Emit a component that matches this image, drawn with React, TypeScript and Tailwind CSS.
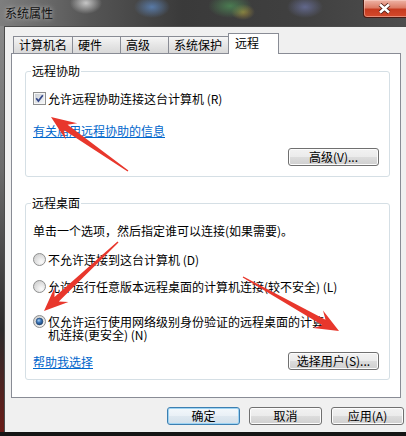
import clsx from 'clsx';

type Pt = [number, number];

// tapered annotation arrow: thin tail, barbed head
function arrowPoints(tail: Pt, tip: Pt, headLen = 22, headHalf = 10, shaftHalf = 3): string {
  const dx = tip[0] - tail[0];
  const dy = tip[1] - tail[1];
  const len = Math.hypot(dx, dy);
  const ux = dx / len;
  const uy = dy / len;
  const px = -uy;
  const py = ux;
  const bx = tip[0] - ux * headLen;
  const by = tip[1] - uy * headLen;
  const nx = tip[0] - ux * headLen * 0.72;
  const ny = tip[1] - uy * headLen * 0.72;
  const pts: Pt[] = [
    [tail[0] + px * 0.7, tail[1] + py * 0.7],
    [nx + px * shaftHalf, ny + py * shaftHalf],
    [bx + px * headHalf, by + py * headHalf],
    tip,
    [bx - px * headHalf, by - py * headHalf],
    [nx - px * shaftHalf, ny - py * shaftHalf],
    [tail[0] - px * 0.7, tail[1] - py * 0.7],
  ];
  return pts.map((p) => `${p[0].toFixed(1)},${p[1].toFixed(1)}`).join(' ');
}

function Checkbox() {
  return (
    <svg width="13" height="13" viewBox="0 0 13 13" className="shrink-0">
      <defs>
        <linearGradient id="cbInner" x1="0" y1="0" x2="1" y2="1">
          <stop offset="0" stopColor="#cbcfd5" />
          <stop offset="1" stopColor="#f4f6f8" />
        </linearGradient>
      </defs>
      <rect x="0.5" y="0.5" width="12" height="12" fill="#f6f6f6" stroke="#8e8f8f" />
      <rect x="2" y="2" width="9" height="9" fill="url(#cbInner)" />
      <path d="M3.2 6.2 L5.4 9 L9.8 3.2" stroke="#34488a" strokeWidth="1.7" fill="none" />
    </svg>
  );
}

function Radio({ checked }: { checked?: boolean }) {
  return (
    <svg width="13" height="13" viewBox="0 0 13 13" className="shrink-0">
      <defs>
        <radialGradient id="rdFill" cx="0.65" cy="0.7" r="0.7">
          <stop offset="0" stopColor="#fbfbfb" />
          <stop offset="1" stopColor="#d2d2d2" />
        </radialGradient>
        <radialGradient id="rdDot" cx="0.4" cy="0.35" r="0.7">
          <stop offset="0" stopColor="#a9d0f2" />
          <stop offset="0.45" stopColor="#3a74b8" />
          <stop offset="1" stopColor="#173f73" />
        </radialGradient>
      </defs>
      <circle cx="6.5" cy="6.5" r="6" fill="url(#rdFill)" stroke="#8e8f8f" />
      {checked && <circle cx="6.5" cy="6.5" r="3.4" fill="url(#rdDot)" stroke="#1f3f66" strokeWidth="0.6" />}
    </svg>
  );
}

function WinButton({ label, className, primary }: { label: string; className: string; primary?: boolean }) {
  return (
    <div
      className={clsx(
        'flex h-[18px] items-center justify-center rounded-[3px] border text-[12px] leading-none',
        primary
          ? 'border-[#3c7fb1] bg-[linear-gradient(#f3f8fb,#e9f0f6_50%,#dee8f0_50%,#d3e0ea)] shadow-[inset_0_0_0_1px_#9dd3f3]'
          : 'border-[#707070] bg-[linear-gradient(#f2f2f2,#ebebeb_50%,#dddddd_50%,#cfcfcf)] shadow-[inset_0_0_0_1px_#fcfcfc]',
        className,
      )}
    >
      {label}
    </div>
  );
}

const tabs = [
  { label: '计算机名', w: 'w-[60px]' },
  { label: '硬件', w: 'w-[49px]' },
  { label: '高级', w: 'w-[49px]' },
  { label: '系统保护', w: 'w-[61px]' },
];

function TitleBar() {
  return (
    <div className="flex h-[26px] items-start justify-between bg-[radial-gradient(ellipse_16px_11px_at_86px_3px,rgba(235,235,235,0.75),transparent),radial-gradient(ellipse_18px_11px_at_152px_7px,rgba(95,140,200,0.75),transparent),radial-gradient(ellipse_22px_12px_at_230px_6px,rgba(80,150,90,0.7),transparent),radial-gradient(ellipse_12px_8px_at_243px_12px,rgba(210,180,60,0.55),transparent),radial-gradient(ellipse_18px_11px_at_305px_7px,rgba(120,130,190,0.6),transparent),linear-gradient(90deg,#7e7e7e,#555_22%,#3a3a3a_45%,#404040_75%,#4d4d4d)]">
      <span className="ml-[5px] mt-[5px] text-[12px] leading-[16px] text-[#111] [text-shadow:0_0_5px_rgba(255,255,255,0.7)]">
        系统属性
      </span>
      <div className="-mr-[4px] flex h-[18px] w-[47px] items-center justify-center rounded-bl-[4px] border border-t-0 border-[#4a1a12] bg-[linear-gradient(#eeb4a6,#dc7c66_45%,#c63b20_55%,#d44a2c)] shadow-[inset_0_0_0_1px_rgba(255,220,210,0.45)]">
        <svg width="13" height="11" viewBox="0 0 13 11" className="-ml-[4px]">
          <path d="M2 1.5 L11 9.5 M11 1.5 L2 9.5" stroke="#4a1a12" strokeWidth="4.2" />
          <path d="M2 1.5 L11 9.5 M11 1.5 L2 9.5" stroke="#ffffff" strokeWidth="2.6" />
        </svg>
      </div>
    </div>
  );
}

export default function App() {
  return (
    <div className="relative h-[436px] w-[406px] overflow-hidden bg-[#151515] font-['Noto_Sans_CJK_SC','Noto_Sans',sans-serif] text-[12px] text-black">
      <TitleBar />
      <div className="flex h-[406px]">
        <div className="w-[4px] bg-[linear-gradient(#8a8a8a,#6b6b6b_35%,#2c2a2a_75%,#6a1c18)]" />
        <div className="flex flex-1 flex-col border-l border-t border-[#4b4b4b] bg-[#f0f0f0]">
          {/* tab strip */}
          <div className="ml-[8px] mt-[6px] flex h-[20px] items-end">
            {tabs.map((t, i) => (
              <div
                key={t.label}
                className={clsx(
                  'h-[17px] border border-b-0 border-[#898c95] bg-[linear-gradient(#f5f5f5,#e3e3e3_60%,#d9d9d9)] pl-[5px] leading-[16px]',
                  t.w,
                  i > 0 && '-ml-px',
                )}
              >
                {t.label}
              </div>
            ))}
            <div className="relative z-10 -mb-px -ml-px h-[21px] w-[51px] border border-b-0 border-[#898c95] bg-white pl-[6px] pt-[1px] leading-[16px]">
              远程
            </div>
          </div>

          {/* tab panel */}
          <div className="ml-[6px] h-[345px] w-[390px] border border-[#898c95] bg-white pl-[13px] pt-[17px]">
            {/* 远程协助 */}
            <div className="relative h-[106px] w-[365px] rounded-[3px] border border-[#d5dfe5]">
              <span className="absolute left-[5px] top-[-9px] bg-white px-[1px] leading-[16px]">远程协助</span>
              <div className="ml-[7px] mt-[18px] flex h-[17px] items-center gap-[2px]">
                <Checkbox />
                <span className="leading-[17px]">允许远程协助连接这台计算机 (R)</span>
              </div>
              <div className="ml-[7px] mt-[15px] leading-[17px] text-[#0066cc] underline">
                有关启用远程协助的信息
              </div>
              <div className="mt-[9px] flex justify-end pr-[10px]">
                <WinButton label="高级(V)..." className="w-[91px]" />
              </div>
            </div>

            {/* 远程桌面 */}
            <div className="relative mt-[26px] h-[177px] w-[365px] rounded-[3px] border border-[#d5dfe5]">
              <span className="absolute left-[5px] top-[-9px] bg-white px-[1px] leading-[16px]">远程桌面</span>
              <div className="ml-[7px] mt-[18px] leading-[17px]">单击一个选项，然后指定谁可以连接(如果需要)。</div>
              <div className="ml-[7px] mt-[12px] flex h-[17px] items-center gap-[2px]">
                <Radio />
                <span className="leading-[17px]">不允许连接到这台计算机 (D)</span>
              </div>
              <div className="ml-[7px] mt-[10px] flex h-[17px] items-center gap-[2px]">
                <Radio />
                <span className="leading-[17px]">允许运行任意版本远程桌面的计算机连接(较不安全) (L)</span>
              </div>
              <div className="ml-[7px] mt-[20px] flex items-start gap-[2px]">
                <Radio checked />
                <span className="leading-[13px]">
                  仅允许运行使用网络级别身份验证的远程桌面的计算
                  <br />
                  机连接(更安全) (N)
                </span>
              </div>
              <div className="ml-[7px] mt-[11px] flex items-end justify-between pr-[10px]">
                <span className="leading-[17px] text-[#0066cc] underline">帮助我选择</span>
                <WinButton label="选择用户(S)..." className="w-[91px]" />
              </div>
            </div>
          </div>

          {/* dialog buttons */}
          <div className="mt-[9px] flex gap-[9px] pl-[162px]">
            <WinButton label="确定" className="w-[73px]" primary />
            <WinButton label="取消" className="w-[73px]" />
            <WinButton label="应用(A)" className="w-[73px]" />
          </div>
        </div>
      </div>

      {/* red annotation arrows */}
      <svg className="pointer-events-none absolute inset-0" width="406" height="436" viewBox="0 0 406 436">
        <polygon points={arrowPoints([128, 171], [51, 117], 25, 10, 3.2)} fill="#e8372c" />
        <polygon points={arrowPoints([118, 242], [44, 311], 24, 10, 3.2)} fill="#e8372c" />
        <polygon points={arrowPoints([243, 277], [339, 331], 24, 10, 3.2)} fill="#e8372c" />
      </svg>
    </div>
  );
}
